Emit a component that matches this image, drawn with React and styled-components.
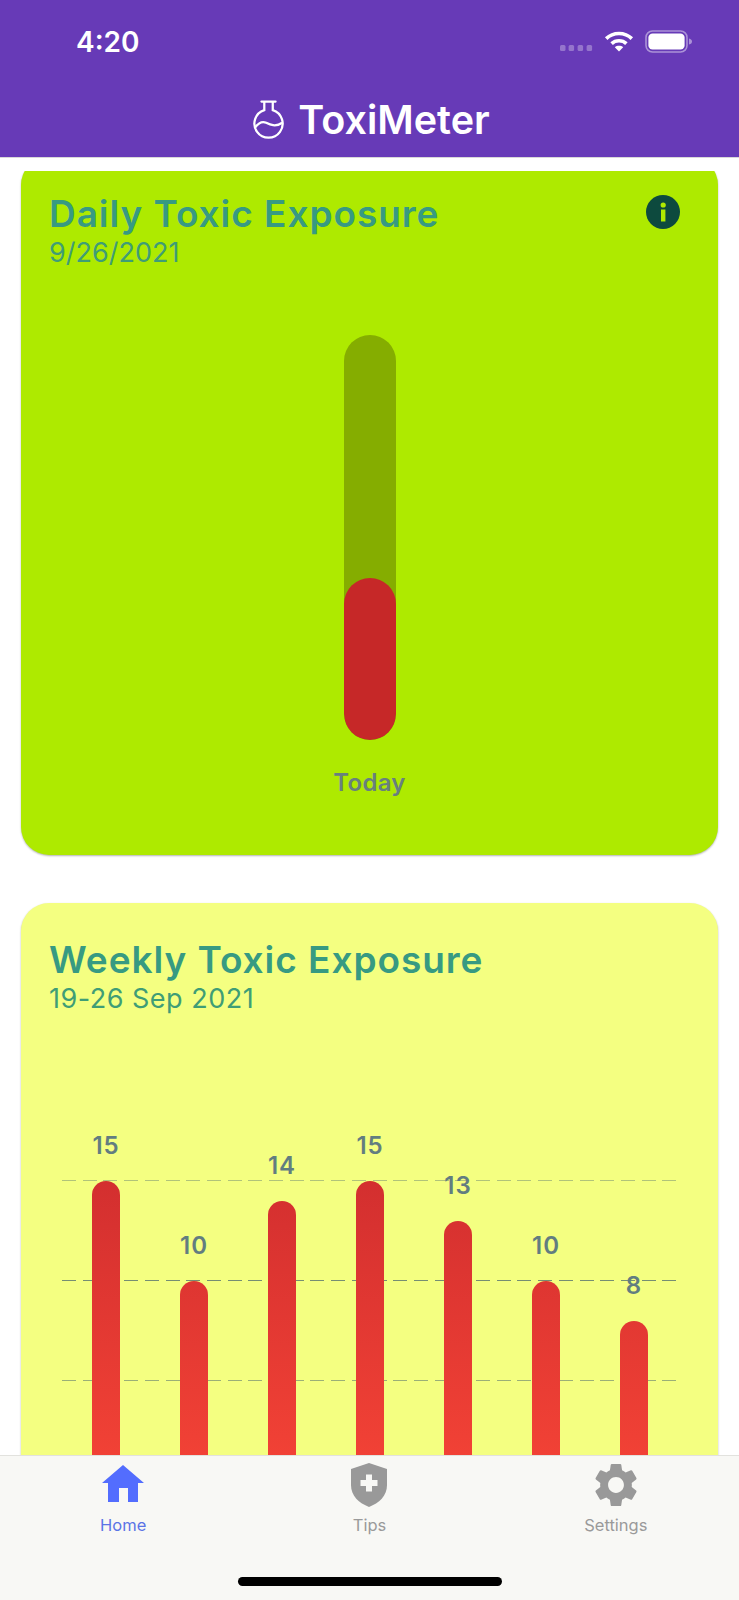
import React from "react";
import styled, { createGlobalStyle } from "styled-components";

const Global = createGlobalStyle`
  html, body { margin: 0; padding: 0; background: #fff; }
  * { box-sizing: border-box; }
`;

const Screen = styled.div`
  width: 739px;
  height: 1600px;
  display: flex;
  flex-direction: column;
  overflow: hidden;
  background: #fff;
  font-family: Inter, "Liberation Sans", sans-serif;
`;

const Header = styled.header`
  flex: none;
  height: 158px;
  background: #673ab7;
  border-bottom: 1px solid #d8d8d8;
  color: #fff;
`;

const StatusBar = styled.div`
  height: 85px;
  padding: 24px 46px 0 76px;
  display: flex;
  justify-content: space-between;
  align-items: flex-start;
`;

const Clock = styled.span`
  font-size: 28px;
  line-height: 36px;
  font-weight: 600;
`;

const StatusIcons = styled.div`
  display: flex;
  align-items: flex-start;
  margin-top: 6px;
`;

const Brand = styled.div`
  height: 60px;
  display: flex;
  justify-content: center;
  align-items: flex-start;
  gap: 13px;
  padding: 13px 0 0 4px;
`;

const BrandName = styled.span`
  font-size: 39.5px;
  line-height: 45px;
  font-weight: 600;
`;

const Viewport = styled.main`
  flex: 1;
  min-height: 0;
  margin-top: 13px;
  overflow: hidden;
`;

const Card = styled.section`
  position: relative;
  margin: ${(p) => p.$margin};
  width: 697px;
  height: ${(p) => p.$height}px;
  border-radius: 28px;
  background: ${(p) => p.$bg};
  box-shadow: 0 1px 2px rgba(0, 0, 0, 0.3);
  padding: 35px 28px 0;
`;

const Title = styled.h2`
  margin: 0;
  font-size: 37px;
  line-height: 44px;
  font-weight: 600;
  letter-spacing: 0.95px;
  color: #379a82;
`;

const Subtitle = styled.p`
  margin: 0;
  font-size: 27px;
  line-height: 34px;
  font-weight: 400;
  letter-spacing: ${(p) => p.$spacing}px;
  color: #3f9d76;
`;

const InfoBadge = styled.svg`
  position: absolute;
  top: 38px;
  right: 38px;
`;

const Gauge = styled.div`
  display: flex;
  flex-direction: column;
  align-items: center;
  margin-top: 65px;
`;

const Track = styled.div`
  width: 52px;
  height: 405px;
  border-radius: 26px;
  background: #85ad00;
  display: flex;
  flex-direction: column;
  justify-content: flex-end;
  overflow: hidden;
`;

const Fill = styled.div`
  height: ${(p) => p.$height}px;
  border-radius: 26px;
  background: #c62828;
`;

const GaugeLabel = styled.div`
  margin-top: 29px;
  font-size: 24px;
  line-height: 28px;
  font-weight: 600;
  letter-spacing: 0.3px;
  color: #68807f;
`;

const Chart = styled.div`
  position: relative;
  margin: 105px 0 0 13px;
  width: 616px;
  height: 360px;
  display: flex;
  align-items: flex-end;
`;

const GridLine = styled.div`
  position: absolute;
  left: 0;
  right: 0;
  height: 1px;
  bottom: ${(p) => p.$bottom}px;
  opacity: ${(p) => p.$opacity};
  background: repeating-linear-gradient(to right, #5f7a70 0 14px, transparent 14px 20.7px);
`;

const Column = styled.div`
  position: relative;
  flex: 1;
  display: flex;
  flex-direction: column;
  align-items: center;
`;

const BarValue = styled.span`
  font-size: 24px;
  line-height: 28px;
  font-weight: 600;
  letter-spacing: 1px;
  color: #627d80;
  margin-bottom: 21px;
`;

const Bar = styled.div`
  width: 28px;
  height: ${(p) => p.$value * 20}px;
  border-radius: 14px 14px 0 0;
  background: linear-gradient(to bottom, #d32f2f, #f44336) bottom / 100% 300px no-repeat;
`;

const TabBar = styled.nav`
  flex: none;
  height: 145px;
  background: #f8f8f5;
  border-top: 1px solid #e2e2de;
  position: relative;
  display: flex;
  align-items: flex-start;
`;

const Tab = styled.div`
  flex: 1;
  display: flex;
  flex-direction: column;
  align-items: center;
  padding-top: 7px;
`;

const TabIcon = styled.div`
  height: 44px;
  display: flex;
  align-items: center;
  justify-content: center;
`;

const TabLabel = styled.span`
  margin-top: 8px;
  font-size: 16.5px;
  line-height: 20px;
  color: ${(p) => (p.$active ? "#5b74e6" : "#9a9a9a")};
`;

const HomeIndicator = styled.div`
  position: absolute;
  left: 238px;
  bottom: 14px;
  width: 264px;
  height: 9px;
  border-radius: 5px;
  background: #000;
`;

const HomeSvg = styled.svg`
  margin-bottom: 3px;
`;

const Flask = () => (
  <svg width="32" height="42" viewBox="0 0 34 44" fill="none" stroke="#fff" strokeWidth="2.4">
    <path d="M9 3.5H24" strokeLinecap="round" />
    <path d="M12 3.5V12.6A15 15 0 1 0 21 12.6V3.5" />
    <path d="M2.2 31C6 26 10 24 14 26S24 31 31 26" />
  </svg>
);

const CellDots = () => (
  <svg width="35" height="22" viewBox="0 0 35 22" fill="#fff" fillOpacity="0.3">
    <rect x="1" y="15" width="5.5" height="6" rx="1.5" />
    <rect x="9.6" y="15" width="5.5" height="6" rx="1.5" />
    <rect x="18.6" y="15" width="5.5" height="6" rx="1.5" />
    <rect x="27.6" y="15" width="5.5" height="6" rx="1.5" />
  </svg>
);

const Wifi = () => (
  <svg width="30" height="22" viewBox="0 0 30 22" fill="none" stroke="#fff" strokeWidth="3.6" style={{ margin: "0 11px 0 10px" }}>
    <path d="M2.2 8.6C9.2 1.8 20.8 1.8 27.8 8.6" />
    <path d="M7.6 13.6C11.6 9.8 18.4 9.8 22.4 13.6" />
    <path d="M15 21.6L10.8 17.2C13 15.3 17 15.3 19.2 17.2Z" fill="#fff" stroke="none" />
  </svg>
);

const Battery = () => (
  <svg width="48" height="23" viewBox="0 0 48 23">
    <rect x="1" y="1" width="41" height="21" rx="6.5" fill="none" stroke="#fff" strokeOpacity="0.45" strokeWidth="1.6" />
    <rect x="3.4" y="3.4" width="36.2" height="16.2" rx="4.2" fill="#fff" />
    <path d="M44 8.5C46 9 47 10 47 11.5S46 14 44 14.5Z" fill="#fff" fillOpacity="0.45" />
  </svg>
);

const Info = () => (
  <InfoBadge width="34" height="34" viewBox="0 0 34 34">
    <circle cx="17" cy="17" r="17" fill="#0d4a3e" />
    <rect x="15" y="14.5" width="4.4" height="12" fill="#aeea00" />
    <circle cx="17.2" cy="10" r="2.6" fill="#aeea00" />
  </InfoBadge>
);

const HomeGlyph = () => (
  <HomeSvg width="42" height="37" viewBox="0 0 42 37" fill="#536dfe">
    <path d="M21 0L42 18H36V37H26V23H17V37H6V18H0Z" />
  </HomeSvg>
);

const ShieldGlyph = () => (
  <svg width="36" height="44" viewBox="0 0 36 44">
    <path d="M18 0L36 6V22C36 33 28 40 18 44C8 40 0 33 0 22V6Z" fill="#999" />
    <path d="M15 11.5H21V17H26.5V23H21V28.5H15V23H9.5V17H15Z" fill="#f8f8f5" />
  </svg>
);

const GearGlyph = () => (
  <svg width="44" height="44" viewBox="2 2 20 20" fill="#999">
    <path d="M19.14 12.94c.04-.3.06-.61.06-.94 0-.32-.02-.64-.07-.94l2.03-1.58c.18-.14.23-.41.12-.61l-1.92-3.32c-.12-.22-.37-.29-.59-.22l-2.39.96c-.5-.38-1.03-.7-1.62-.94l-.36-2.54c-.04-.24-.24-.41-.48-.41h-3.84c-.24 0-.43.17-.47.41l-.36 2.54c-.59.24-1.13.57-1.62.94l-2.39-.96c-.22-.08-.47 0-.59.22L2.74 8.87c-.12.21-.08.47.12.61l2.03 1.58c-.05.3-.09.63-.09.94s.02.64.07.94l-2.03 1.58c-.18.14-.23.41-.12.61l1.92 3.32c.12.22.37.29.59.22l2.39-.96c.5.38 1.03.7 1.62.94l.36 2.54c.05.24.24.41.48.41h3.84c.24 0 .44-.17.47-.41l.36-2.54c.59-.24 1.13-.56 1.62-.94l2.39.96c.22.08.47 0 .59-.22l1.92-3.32c.12-.22.07-.47-.12-.61l-2.01-1.58zM12 15.6c-1.98 0-3.6-1.62-3.6-3.6s1.62-3.6 3.6-3.6 3.6 1.62 3.6 3.6-1.62 3.6-3.6 3.6z" />
  </svg>
);

const week = [15, 10, 14, 15, 13, 10, 8];
const gridLines = [
  { bottom: 300, opacity: 0.45 },
  { bottom: 200, opacity: 0.85 },
  { bottom: 100, opacity: 0.6 },
];

export default function App() {
  return (
    <Screen>
      <Global />
      <Header>
        <StatusBar>
          <Clock>4:20</Clock>
          <StatusIcons>
            <CellDots />
            <Wifi />
            <Battery />
          </StatusIcons>
        </StatusBar>
        <Brand>
          <Flask />
          <BrandName>ToxiMeter</BrandName>
        </Brand>
      </Header>
      <Viewport>
        <Card $margin="-14px 0 0 21px" $height={698} $bg="#aeea00">
          <Title>Daily Toxic Exposure</Title>
          <Subtitle $spacing={0}>9/26/2021</Subtitle>
          <Info />
          <Gauge>
            <Track>
              <Fill $height={162} />
            </Track>
            <GaugeLabel>Today</GaugeLabel>
          </Gauge>
        </Card>
        <Card $margin="48px 0 0 21px" $height={700} $bg="#f4ff81">
          <Title>Weekly Toxic Exposure</Title>
          <Subtitle $spacing={0.5}>19-26 Sep 2021</Subtitle>
          <Chart>
            {gridLines.map((l) => (
              <GridLine key={l.bottom} $bottom={l.bottom} $opacity={l.opacity} />
            ))}
            {week.map((v, i) => (
              <Column key={i}>
                <BarValue>{v}</BarValue>
                <Bar $value={v} />
              </Column>
            ))}
          </Chart>
        </Card>
      </Viewport>
      <TabBar>
        <Tab>
          <TabIcon>
            <HomeGlyph />
          </TabIcon>
          <TabLabel $active>Home</TabLabel>
        </Tab>
        <Tab>
          <TabIcon>
            <ShieldGlyph />
          </TabIcon>
          <TabLabel>Tips</TabLabel>
        </Tab>
        <Tab>
          <TabIcon>
            <GearGlyph />
          </TabIcon>
          <TabLabel>Settings</TabLabel>
        </Tab>
        <HomeIndicator />
      </TabBar>
    </Screen>
  );
}
